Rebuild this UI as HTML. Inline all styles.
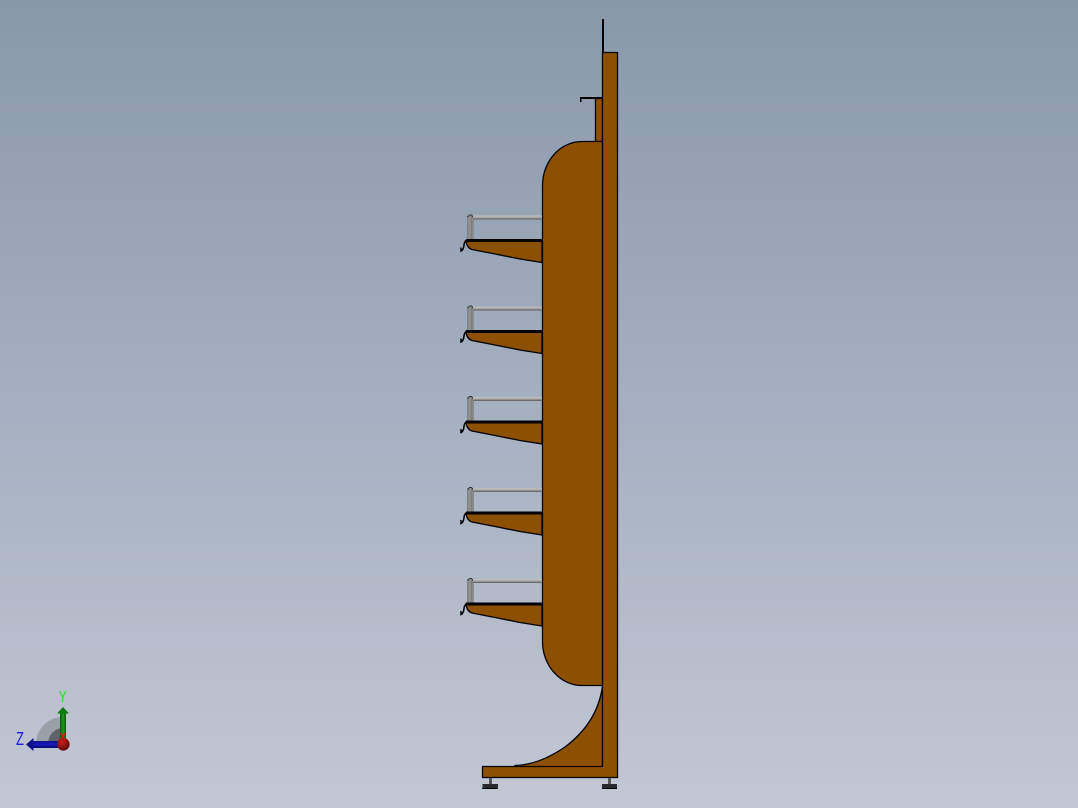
<!DOCTYPE html>
<html>
<head>
<meta charset="utf-8">
<style>
html,body{margin:0;padding:0;width:1078px;height:808px;overflow:hidden}
body{background:linear-gradient(180deg,#8898ab 0%,#c2c7d4 100%)}
svg{display:block}
</style>
</head>
<body>
<svg width="1078" height="808" viewBox="0 0 1078 808" xmlns="http://www.w3.org/2000/svg">
<defs>
<linearGradient id="post" x1="0" x2="1" y1="0" y2="0">
<stop offset="0" stop-color="#7e7e7e"/><stop offset=".45" stop-color="#969696"/><stop offset=".6" stop-color="#7c7c7c"/><stop offset="1" stop-color="#929292"/>
</linearGradient>
<linearGradient id="rail" x1="0" x2="0" y1="0" y2="1">
<stop offset="0" stop-color="#c4c4c4"/><stop offset=".5" stop-color="#a8a8a8"/><stop offset="1" stop-color="#555"/>
</linearGradient>
<linearGradient id="yarrow" x1="0" x2="1" y1="0" y2="0">
<stop offset="0" stop-color="#0a5a0a"/><stop offset=".5" stop-color="#1c9a1c"/><stop offset="1" stop-color="#0a5a0a"/>
</linearGradient>
<linearGradient id="zarrow" x1="0" x2="0" y1="0" y2="1">
<stop offset="0" stop-color="#10108a"/><stop offset=".5" stop-color="#1a1ac0"/><stop offset="1" stop-color="#08086a"/>
</linearGradient>
<radialGradient id="ball" cx=".4" cy=".35" r=".7">
<stop offset="0" stop-color="#c82020"/><stop offset="1" stop-color="#5a0505"/>
</radialGradient>
<g id="shelf">
<rect x="467" y="216" width="7" height="24" fill="url(#post)"/>
<path d="M467.5 217 L469.5 215 L471.5 215 L474 218" fill="none" stroke="#333" stroke-width="1.1"/>
<rect x="473" y="215.5" width="69" height="4" fill="url(#rail)"/>
<path d="M466 241 L542 241 L542 262.5 L520 259 L495 254 L472 249.5 Q467 248 466 241 Z" fill="#8d5000" stroke="#000" stroke-width="1.3"/>
<rect x="466" y="239" width="76" height="3" fill="#000"/>
<path d="M467 240 Q464.5 241 464 245 Q463.5 250 461 251 L461 247.5" fill="none" stroke="#000" stroke-width="1.5"/>
</g>
</defs>

<!-- spike and hook -->
<rect x="602" y="19" width="2" height="34" fill="#000"/>
<rect x="580" y="97" width="23" height="2" fill="#000"/>
<rect x="580" y="97" width="1.5" height="5" fill="#000"/>

<!-- upper post -->
<rect x="595.5" y="98.5" width="7" height="43" fill="#8d5000" stroke="#000" stroke-width="1.3"/>

<!-- curved foot bracket -->
<path d="M602.5 686 C599 712 585 732 565 747 C549 758 532 765 515 765.5 L515 767 L602.5 767 Z" fill="#8d5000" stroke="#000" stroke-width="1.3"/>

<!-- base and column -->
<path d="M482.5 766.5 L602.5 766.5 L602.5 52.5 L617.5 52.5 L617.5 777.5 L482.5 777.5 Z" fill="#8d5000" stroke="#000" stroke-width="1.3"/>

<!-- main panel -->
<path d="M602.5 141.5 L582 141.5 A39.5 44 0 0 0 542.5 185.5 L542.5 641.5 A39.5 44 0 0 0 582 685.5 L602.5 685.5 Z" fill="#8d5000" stroke="#000" stroke-width="1.3"/>

<!-- shelves -->
<use href="#shelf"/>
<use href="#shelf" y="91"/>
<use href="#shelf" y="181.5"/>
<use href="#shelf" y="272.5"/>
<use href="#shelf" y="363.5"/>

<!-- feet -->
<rect x="489" y="778" width="3" height="6" fill="#555"/>
<rect x="482.5" y="784" width="15.5" height="5" fill="#2a2a2e"/>
<rect x="482" y="788" width="16" height="1" fill="#000"/>
<rect x="608" y="778" width="3" height="6" fill="#555"/>
<rect x="602" y="784" width="15" height="5" fill="#2a2a2e"/>
<rect x="602" y="788" width="15" height="1" fill="#000"/>

<!-- triad -->
<path d="M63 744 L36 744 A27 27 0 0 1 63 717 Z" fill="#9ba0a8"/>
<path d="M63 744 L48 744 A15 16 0 0 1 63 728 Z" fill="#5f6368"/>
<rect x="60" y="712" width="6" height="30" fill="url(#yarrow)"/>
<path d="M57 713.5 L63 707 L69 713.5 Z" fill="#0f7a0f"/>
<rect x="33" y="741" width="28" height="7" fill="url(#zarrow)"/>
<path d="M33.5 738 L26 744.5 L33.5 751 Z" fill="#10108a"/>
<circle cx="63.3" cy="744.3" r="6.3" fill="url(#ball)"/>
<path d="M60.5 733 L65.5 741 M65.5 733 L60.5 741" stroke="#e01010" stroke-width="1.3" fill="none"/>
<text x="59" y="702" font-family="'Liberation Sans',sans-serif" font-size="16" fill="#22e022" textLength="7.5" lengthAdjust="spacingAndGlyphs">Y</text>
<text x="16" y="745" font-family="'Liberation Sans',sans-serif" font-size="18" fill="#1a1ae0" textLength="8" lengthAdjust="spacingAndGlyphs">Z</text>
</svg>
</body>
</html>
